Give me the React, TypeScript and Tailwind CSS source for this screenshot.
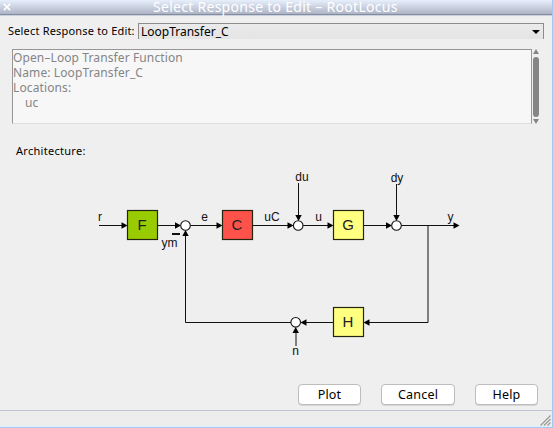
import type { ReactNode } from "react";

type BlockProps = { x: number; y: number; name: string; fill: string };

function Block({ x, y, name, fill }: BlockProps) {
  return (
    <g>
      <rect x={x + 0.5} y={y + 0.5} width="30" height="29" fill={fill} stroke="#25250f" strokeWidth="1.2" />
      <text x={x + 15} y={y + 20} textAnchor="middle" fontSize="15" fill="#222">
        {name}
      </text>
    </g>
  );
}

function Arrow({ d, tip, angle = 0 }: { d: string; tip: [number, number]; angle?: number }) {
  return (
    <g>
      <path d={d} fill="none" stroke="#111" strokeWidth="1" />
      <path d="M0 0L-6 -3.2V3.2Z" fill="#000" transform={`translate(${tip[0]} ${tip[1]}) rotate(${angle})`} />
    </g>
  );
}

function Sum({ x, y }: { x: number; y: number }) {
  return <circle cx={x} cy={y} r="4.8" fill="#fff" stroke="#111" strokeWidth="1.1" />;
}

function Signal({ x, y, children }: { x: number; y: number; children: ReactNode }) {
  return (
    <text x={x} y={y} textAnchor="middle" fontSize="12" fill="#111">
      {children}
    </text>
  );
}

function Diagram() {
  return (
    <svg viewBox="0 165 552 200" className="block h-[200px] w-full font-['Liberation_Sans',Arial,sans-serif]">
      <Arrow d="M99 225.5H122" tip={[127.5, 225.5]} />
      <Arrow d="M158 225.5H176" tip={[181, 225.5]} />
      <Arrow d="M190 225.5H218" tip={[222.5, 225.5]} />
      <Arrow d="M253 225.5H289" tip={[293.5, 225.5]} />
      <Arrow d="M303 225.5H329" tip={[333.5, 225.5]} />
      <Arrow d="M364 225.5H388" tip={[392, 225.5]} />
      <Arrow d="M401 225.5H455" tip={[459.5, 225.5]} />
      <Arrow d="M298.5 183V216" tip={[298.5, 221]} angle={90} />
      <Arrow d="M396.5 184V216" tip={[396.5, 221]} angle={90} />
      <Arrow d="M428 225V322.5H368" tip={[363.5, 322.5]} angle={180} />
      <Arrow d="M333 322.5H305" tip={[300.5, 322.5]} angle={180} />
      <Arrow d="M291 322.5H185.5V235" tip={[185.5, 230]} angle={-90} />
      <Arrow d="M296 346V332" tip={[295.7, 327]} angle={-90} />
      <Block x={127} y={210} name="F" fill="#9c0" />
      <Block x={222} y={210} name="C" fill="#ff524b" />
      <Block x={333} y={210} name="G" fill="#ffff80" />
      <Block x={333} y={307} name="H" fill="#ffff80" />
      <Sum x={185.5} y={225.5} />
      <Sum x={298.2} y={225.5} />
      <Sum x={396.5} y={225.5} />
      <Sum x={295.7} y={322.3} />
      <rect x="172" y="233" width="8" height="2" fill="#111" />
      <Signal x={100} y={221}>r</Signal>
      <Signal x={204.5} y={221}>e</Signal>
      <Signal x={169.5} y={247}>ym</Signal>
      <Signal x={272} y={221}>uC</Signal>
      <Signal x={318.5} y={221}>u</Signal>
      <Signal x={302} y={181}>du</Signal>
      <Signal x={397} y={182}>dy</Signal>
      <Signal x={450.5} y={221}>y</Signal>
      <Signal x={295.5} y={355}>n</Signal>
    </svg>
  );
}

function DialogButton({ label, width }: { label: string; width: string }) {
  return (
    <button
      className={`${width} h-[21px] rounded-[4px] border border-[#bdbdbd] bg-white text-center text-[12.5px] leading-[19px] tracking-[0.2px] text-black shadow-[0_1px_0_#d5d5d5]`}
    >
      {label}
    </button>
  );
}

export default function App() {
  return (
    <div className="flex h-[428px] w-[553px] flex-col overflow-hidden border-r border-b border-[#a5c8ef] bg-[#efefef] font-['Noto_Sans','Open_Sans',sans-serif] text-black">
      <header className="relative h-[16px] shrink-0 border-b border-[#c8d3df] bg-linear-to-b from-[#e8effc] to-[#aab0c1]">
        <svg viewBox="0 0 9 9" className="absolute top-[3px] left-[3px] h-[8px] w-[8px]">
          <path d="M1 1L8 8M8 1L1 8" stroke="#fff" strokeWidth="1.7" />
        </svg>
        <h1 className="h-[15px] border-b border-[#838b9d] pl-[153px] text-[14px] leading-[14px] font-normal tracking-[0.28px] whitespace-nowrap text-white">
          Select Response to Edit – RootLocus
        </h1>
      </header>

      <div className="mt-[7px] flex h-[17px] shrink-0 items-start pr-[8px] pl-[8px]">
        <label className="w-[130px] shrink-0 text-[11px] leading-[15px] tracking-[0.18px] whitespace-nowrap">
          Select Response to Edit:
        </label>
        <div className="flex h-[16px] flex-1 items-center justify-between border-t border-r border-l border-[#8c8c8c] bg-linear-to-b from-[#ebebeb] to-[#e4e4e4] pr-[3px] pl-[2px] text-[12px] leading-[15px]">
          <span>LoopTransfer_C</span>
          <svg viewBox="0 0 8 4" className="h-[4px] w-[8px]">
            <path d="M0 0H8L4 4Z" fill="#000" />
          </svg>
        </div>
      </div>

      <div className="mt-[9px] ml-[12px] flex h-[75px] shrink-0">
        <div className="w-[520px] border border-[#969696] border-b-[#dedede] bg-[#f7f7f7] text-[12px] leading-[15px] tracking-[0.11px] whitespace-pre text-[#858585]">
          <p>Open–Loop Transfer Function</p>
          <p>Name: LoopTransfer_C</p>
          <p>Locations:</p>
          <p className="pl-[12px]">uc</p>
        </div>
        <div className="ml-px flex w-[6px] flex-col items-center justify-between">
          <svg viewBox="0 0 6 5" className="h-[5px] w-[6px]">
            <path d="M0 5L3 0L6 5Z" fill="#858585" />
          </svg>
          <div className="h-[60px] w-[6px] rounded-[3px] bg-[#858585]" />
          <svg viewBox="0 0 6 5" className="h-[5px] w-[6px]">
            <path d="M0 0L3 5L6 0Z" fill="#858585" />
          </svg>
        </div>
      </div>

      <p className="mt-[18px] ml-[16px] h-[17px] shrink-0 text-[11px] leading-[17px] tracking-[0.28px]">Architecture:</p>
      <main className="mt-[6px] h-[200px] shrink-0">
        <Diagram />
      </main>

      <div className="mt-[19px] flex h-[21px] shrink-0 justify-end gap-[20px] pr-[14px]">
        <DialogButton label="Plot" width="w-[63px]" />
        <DialogButton label="Cancel" width="w-[74px]" />
        <DialogButton label="Help" width="w-[63px]" />
      </div>

      <footer className="mt-[5px] flex flex-1 items-end justify-end border-t border-b border-t-[#bec4d2] border-b-[#e0f0ff] bg-[#ededed] pr-px">
        <svg viewBox="0 0 11 11" className="h-[11px] w-[11px]">
          <path d="M0.5 10.5L10.5 0.5M4 10.5L10.5 4M7.5 10.5L10.5 7.5" stroke="#999" strokeWidth="1.1" />
        </svg>
      </footer>
    </div>
  );
}
